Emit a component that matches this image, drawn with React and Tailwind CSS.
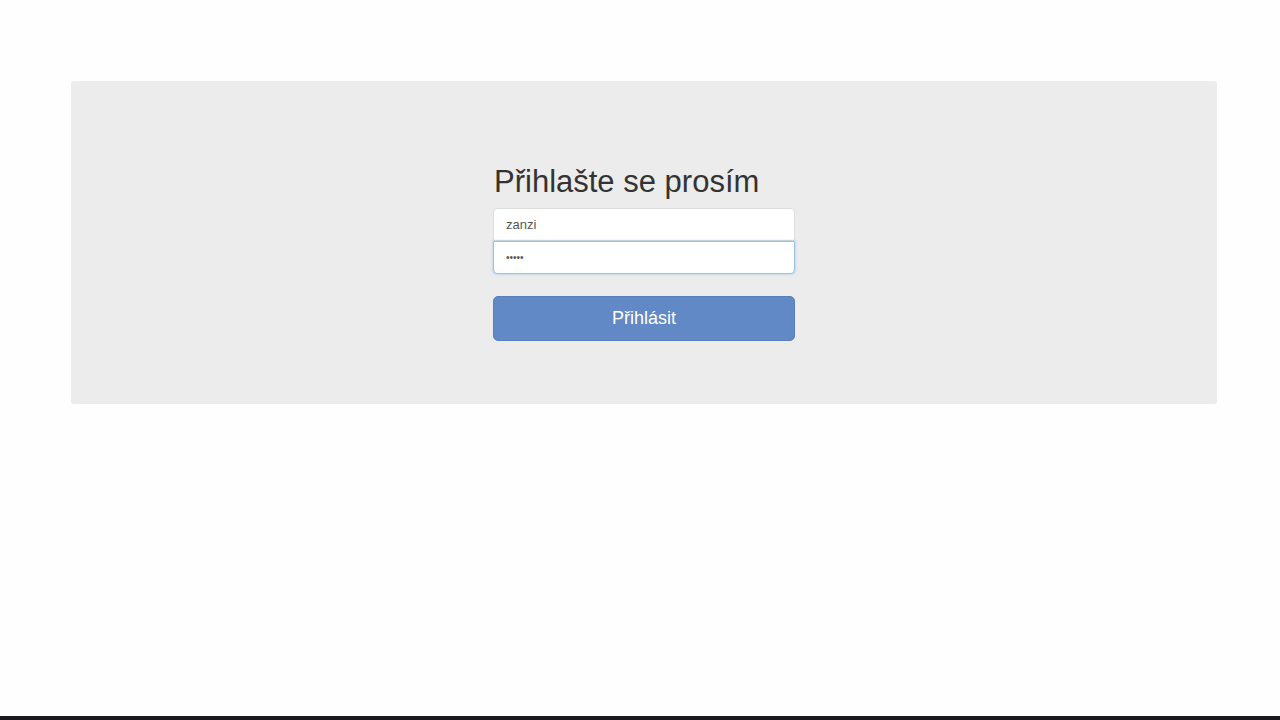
export default function App() {
  return (
    <div
      className="h-[720px] flex flex-col bg-[#fefefe] text-[#333]"
      style={{ fontFamily: '"Liberation Sans", Arial, sans-serif' }}
    >
      <div className="flex-1 pt-[81px] pl-[71px] pr-[63px]">
        <div className="bg-[#ececec] rounded-[3px] h-[323px] pt-[84px] flex justify-center">
          <form className="w-[302px] flex flex-col" onSubmit={(e) => e.preventDefault()}>
            <h2 className="text-[31px] leading-[33px] font-normal text-[#333] mb-[10px] ml-[1px]">
              Přihlašte se prosím
            </h2>
            <input
              type="text"
              defaultValue="zanzi"
              className="h-[33px] w-full bg-white border border-[#ddd] rounded-t-[4px] px-[12px] text-[13px] text-[#555] outline-none"
            />
            <input
              type="password"
              defaultValue="*****"
              className="h-[33px] w-full bg-white border border-[#9fbfe6] rounded-b-[4px] px-[12px] text-[10px] text-[#555] outline-none shadow-[0_0_3px_rgba(102,175,233,0.6)]"
            />
            <button
              type="submit"
              className="mt-[22px] h-[45px] w-full rounded-[5px] bg-[#6189c5] border border-[#5a80bb] text-white text-[18px]"
            >
              Přihlásit
            </button>
          </form>
        </div>
      </div>
      <div className="h-[4px] bg-[#1a1a1f]" />
    </div>
  );
}
